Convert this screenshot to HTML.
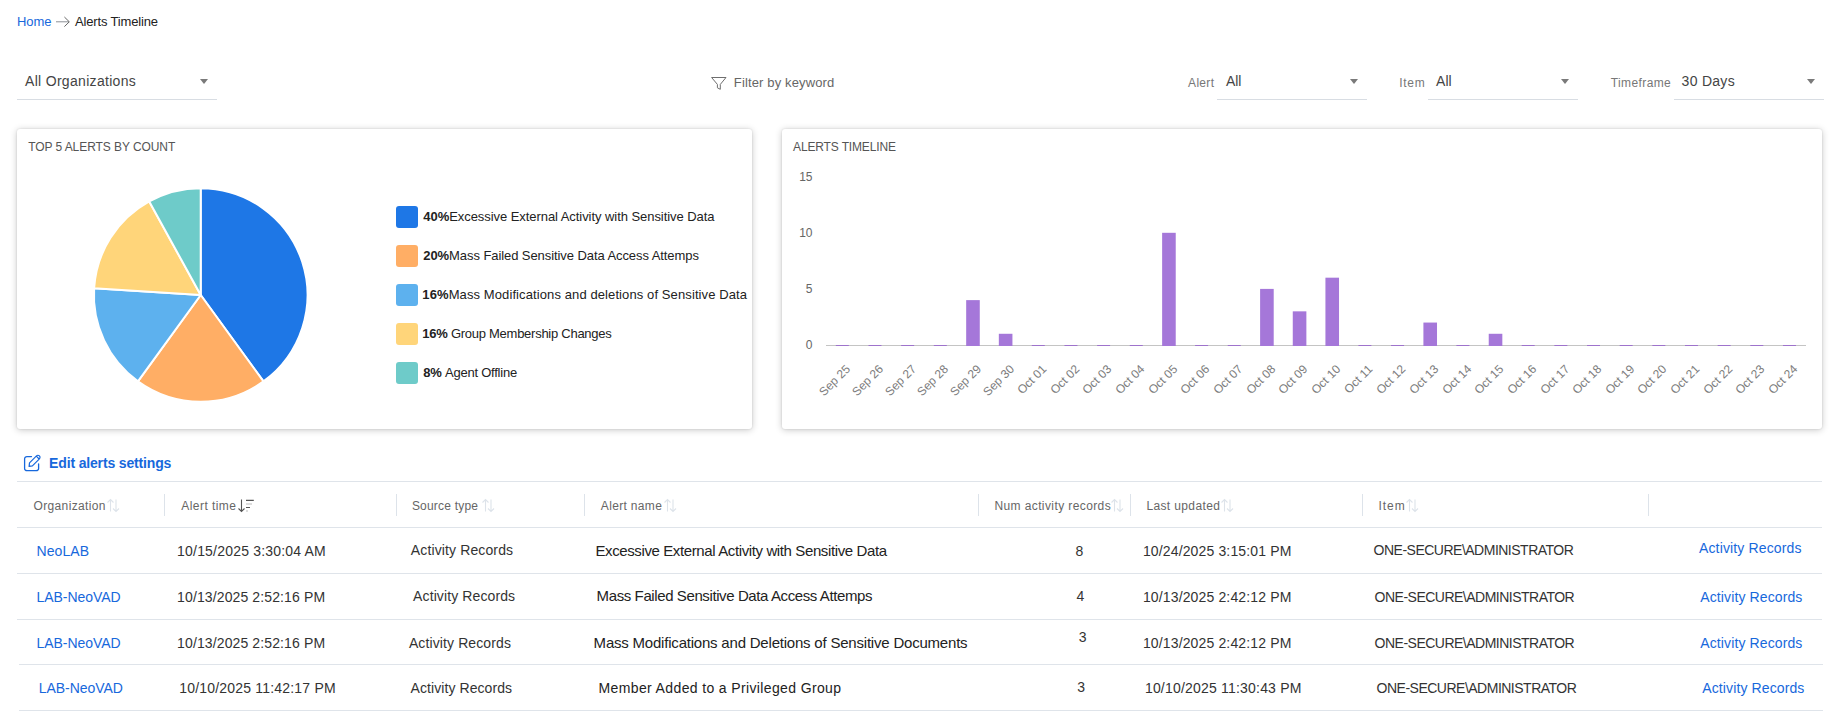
<!DOCTYPE html>
<html><head><meta charset="utf-8"><title>Alerts Timeline</title>
<style>
html,body{margin:0;padding:0;background:#fff;width:1831px;height:714px;overflow:hidden;position:relative;font-family:"Liberation Sans", sans-serif}
.t{position:absolute;white-space:pre;font-family:"Liberation Sans", sans-serif}
.card{position:absolute;background:#fff;border-radius:3px;box-shadow:0 0 2px rgba(0,0,0,0.12),0 1px 7px rgba(0,0,0,0.22)}
.xl{transform-origin:100% 50%;transform:rotate(-45deg)}
b{font-weight:700}
</style></head><body>
<div class="t" style="left:16.90px;top:15.00px;font-size:13px;line-height:13px;color:#1768dc;font-weight:400;letter-spacing:0.000px;">Home</div>
<svg style="position:absolute;left:50px;top:10px" width="25" height="20" viewBox="50 10 25 20"><path d="M56 21.8H69" fill="none" stroke="#8c9196" stroke-width="1"/><path d="M64.4 17L69.3 21.8L64.4 26.6" fill="none" stroke="#666" stroke-width="1"/></svg>
<div class="t" style="left:75.10px;top:15.00px;font-size:13px;line-height:13px;color:#222;font-weight:400;letter-spacing:-0.171px;">Alerts Timeline</div>
<div class="t" style="left:25.00px;top:74.15px;font-size:14px;line-height:14px;color:#444;font-weight:400;letter-spacing:0.312px;">All Organizations</div>
<svg style="position:absolute;left:200px;top:79px" width="8" height="5" viewBox="0 0 8 5"><path d="M0 0H8L4.0 5Z" fill="#7a7a7a"/></svg>
<div style="position:absolute;left:17px;top:99px;width:200px;height:1px;background:#d8dde3;"></div>
<svg style="position:absolute;left:705px;top:70px" width="30" height="25" viewBox="705 70 30 25"><path d="M711.6 77.5H726L720.3 84.4V89.3L717.4 87.8V84.4Z" fill="none" stroke="#6e6e6e" stroke-width="1" stroke-linejoin="round"/></svg>
<div class="t" style="left:733.80px;top:75.70px;font-size:13px;line-height:13px;color:#666;font-weight:400;letter-spacing:0.138px;">Filter by keyword</div>
<div class="t" style="left:1188.10px;top:76.84px;font-size:12px;line-height:12px;color:#777;font-weight:400;letter-spacing:0.300px;">Alert</div>
<div class="t" style="left:1225.90px;top:74.15px;font-size:14px;line-height:14px;color:#444;font-weight:400;letter-spacing:0.000px;">All</div>
<svg style="position:absolute;left:1350px;top:79px" width="8" height="5" viewBox="0 0 8 5"><path d="M0 0H8L4.0 5Z" fill="#7a7a7a"/></svg>
<div style="position:absolute;left:1217px;top:99px;width:150px;height:1px;background:#d8dde3;"></div>
<div class="t" style="left:1399.20px;top:76.84px;font-size:12px;line-height:12px;color:#777;font-weight:400;letter-spacing:0.700px;">Item</div>
<div class="t" style="left:1436.10px;top:74.15px;font-size:14px;line-height:14px;color:#444;font-weight:400;letter-spacing:0.000px;">All</div>
<svg style="position:absolute;left:1561px;top:79px" width="8" height="5" viewBox="0 0 8 5"><path d="M0 0H8L4.0 5Z" fill="#7a7a7a"/></svg>
<div style="position:absolute;left:1428px;top:99px;width:150px;height:1px;background:#d8dde3;"></div>
<div class="t" style="left:1610.70px;top:76.84px;font-size:12px;line-height:12px;color:#777;font-weight:400;letter-spacing:0.400px;">Timeframe</div>
<div class="t" style="left:1681.60px;top:74.15px;font-size:14px;line-height:14px;color:#444;font-weight:400;letter-spacing:0.283px;">30 Days</div>
<svg style="position:absolute;left:1807px;top:79px" width="8" height="5" viewBox="0 0 8 5"><path d="M0 0H8L4.0 5Z" fill="#7a7a7a"/></svg>
<div style="position:absolute;left:1674px;top:99px;width:150px;height:1px;background:#d8dde3;"></div>
<div class="card" style="left:17px;top:129px;width:735px;height:300px"></div>
<div class="card" style="left:782px;top:129px;width:1040px;height:300px"></div>
<div class="t" style="left:28.20px;top:140.84px;font-size:12px;line-height:12px;color:#555;font-weight:400;letter-spacing:-0.070px;">TOP 5 ALERTS BY COUNT</div>
<div class="t" style="left:793.10px;top:140.84px;font-size:12px;line-height:12px;color:#555;font-weight:400;letter-spacing:-0.150px;">ALERTS TIMELINE</div>
<svg style="position:absolute;left:0;top:0" width="760" height="440"><path d="M200.7 295L200.700 188.200A106.8 106.8 0 0 1 263.475 381.403Z" fill="#1e77e6" stroke="#fff" stroke-width="2" stroke-linejoin="round"/><path d="M200.7 295L263.475 381.403A106.8 106.8 0 0 1 137.925 381.403Z" fill="#ffae65" stroke="#fff" stroke-width="2" stroke-linejoin="round"/><path d="M200.7 295L137.925 381.403A106.8 106.8 0 0 1 94.111 288.294Z" fill="#5db1ee" stroke="#fff" stroke-width="2" stroke-linejoin="round"/><path d="M200.7 295L94.111 288.294A106.8 106.8 0 0 1 149.249 201.410Z" fill="#ffd57a" stroke="#fff" stroke-width="2" stroke-linejoin="round"/><path d="M200.7 295L149.249 201.410A106.8 106.8 0 0 1 200.700 188.200Z" fill="#6ecbc9" stroke="#fff" stroke-width="2" stroke-linejoin="round"/></svg>
<div style="position:absolute;left:396px;top:206px;width:21.5px;height:22px;background:#1e77e6;border-radius:3px"></div>
<div class="t" style="left:423.30px;top:209.80px;font-size:13px;line-height:13px;color:#222;font-weight:400;letter-spacing:-0.059px;"><b>40%</b>Excessive External Activity with Sensitive Data</div>
<div style="position:absolute;left:396px;top:245px;width:21.5px;height:22px;background:#ffae65;border-radius:3px"></div>
<div class="t" style="left:423.30px;top:248.80px;font-size:13px;line-height:13px;color:#222;font-weight:400;letter-spacing:-0.077px;"><b>20%</b>Mass Failed Sensitive Data Access Attemps</div>
<div style="position:absolute;left:396px;top:284px;width:21.5px;height:22px;background:#5db1ee;border-radius:3px"></div>
<div class="t" style="left:422.30px;top:287.80px;font-size:13px;line-height:13px;color:#222;font-weight:400;letter-spacing:0.102px;"><b>16%</b>Mass Modifications and deletions of Sensitive Data</div>
<div style="position:absolute;left:396px;top:323px;width:21.5px;height:22px;background:#ffd57a;border-radius:3px"></div>
<div class="t" style="left:422.30px;top:326.80px;font-size:13px;line-height:13px;color:#222;font-weight:400;letter-spacing:-0.263px;"><b>16%</b>&nbsp;Group Membership Changes</div>
<div style="position:absolute;left:396px;top:362px;width:21.5px;height:22px;background:#6ecbc9;border-radius:3px"></div>
<div class="t" style="left:423.30px;top:365.80px;font-size:13px;line-height:13px;color:#222;font-weight:400;letter-spacing:-0.233px;"><b>8%</b>&nbsp;Agent Offline</div>
<svg style="position:absolute;left:0;top:0" width="1831" height="440"><rect x="826" y="345" width="980" height="1" fill="#c4c4c4"/><rect x="835.83" y="345" width="13" height="1" fill="#9e73cc"/><rect x="868.49" y="345" width="13" height="1" fill="#9e73cc"/><rect x="901.15" y="345" width="13" height="1" fill="#9e73cc"/><rect x="933.81" y="345" width="13" height="1" fill="#9e73cc"/><rect x="966.17" y="300.12" width="13.6" height="45.88" fill="#a577d9"/><rect x="998.83" y="333.78" width="13.6" height="12.22" fill="#a577d9"/><rect x="1031.79" y="345" width="13" height="1" fill="#9e73cc"/><rect x="1064.45" y="345" width="13" height="1" fill="#9e73cc"/><rect x="1097.11" y="345" width="13" height="1" fill="#9e73cc"/><rect x="1129.77" y="345" width="13" height="1" fill="#9e73cc"/><rect x="1162.13" y="232.80" width="13.6" height="113.20" fill="#a577d9"/><rect x="1195.09" y="345" width="13" height="1" fill="#9e73cc"/><rect x="1227.75" y="345" width="13" height="1" fill="#9e73cc"/><rect x="1260.11" y="288.90" width="13.6" height="57.10" fill="#a577d9"/><rect x="1292.77" y="311.34" width="13.6" height="34.66" fill="#a577d9"/><rect x="1325.43" y="277.68" width="13.6" height="68.32" fill="#a577d9"/><rect x="1358.39" y="345" width="13" height="1" fill="#9e73cc"/><rect x="1391.05" y="345" width="13" height="1" fill="#9e73cc"/><rect x="1423.41" y="322.56" width="13.6" height="23.44" fill="#a577d9"/><rect x="1456.37" y="345" width="13" height="1" fill="#9e73cc"/><rect x="1488.73" y="333.78" width="13.6" height="12.22" fill="#a577d9"/><rect x="1521.69" y="345" width="13" height="1" fill="#9e73cc"/><rect x="1554.35" y="345" width="13" height="1" fill="#9e73cc"/><rect x="1587.01" y="345" width="13" height="1" fill="#9e73cc"/><rect x="1619.67" y="345" width="13" height="1" fill="#9e73cc"/><rect x="1652.33" y="345" width="13" height="1" fill="#9e73cc"/><rect x="1684.99" y="345" width="13" height="1" fill="#9e73cc"/><rect x="1717.65" y="345" width="13" height="1" fill="#9e73cc"/><rect x="1750.31" y="345" width="13" height="1" fill="#9e73cc"/><rect x="1782.97" y="345" width="13" height="1" fill="#9e73cc"/></svg>
<div class="t" style="right:1018.5px;top:170.64px;font-size:12px;line-height:12px;color:#666">15</div>
<div class="t" style="right:1018.5px;top:226.74px;font-size:12px;line-height:12px;color:#666">10</div>
<div class="t" style="right:1018.5px;top:282.84px;font-size:12px;line-height:12px;color:#666">5</div>
<div class="t" style="right:1018.5px;top:339.34px;font-size:12px;line-height:12px;color:#666">0</div>
<div class="t xl" style="right:982.67px;top:360.5px;font-size:12px;line-height:12px;color:#7c7c7c">Sep 25</div>
<div class="t xl" style="right:950.01px;top:360.5px;font-size:12px;line-height:12px;color:#7c7c7c">Sep 26</div>
<div class="t xl" style="right:917.35px;top:360.5px;font-size:12px;line-height:12px;color:#7c7c7c">Sep 27</div>
<div class="t xl" style="right:884.69px;top:360.5px;font-size:12px;line-height:12px;color:#7c7c7c">Sep 28</div>
<div class="t xl" style="right:852.03px;top:360.5px;font-size:12px;line-height:12px;color:#7c7c7c">Sep 29</div>
<div class="t xl" style="right:819.37px;top:360.5px;font-size:12px;line-height:12px;color:#7c7c7c">Sep 30</div>
<div class="t xl" style="right:786.71px;top:360.5px;font-size:12px;line-height:12px;color:#7c7c7c">Oct 01</div>
<div class="t xl" style="right:754.05px;top:360.5px;font-size:12px;line-height:12px;color:#7c7c7c">Oct 02</div>
<div class="t xl" style="right:721.39px;top:360.5px;font-size:12px;line-height:12px;color:#7c7c7c">Oct 03</div>
<div class="t xl" style="right:688.73px;top:360.5px;font-size:12px;line-height:12px;color:#7c7c7c">Oct 04</div>
<div class="t xl" style="right:656.07px;top:360.5px;font-size:12px;line-height:12px;color:#7c7c7c">Oct 05</div>
<div class="t xl" style="right:623.41px;top:360.5px;font-size:12px;line-height:12px;color:#7c7c7c">Oct 06</div>
<div class="t xl" style="right:590.75px;top:360.5px;font-size:12px;line-height:12px;color:#7c7c7c">Oct 07</div>
<div class="t xl" style="right:558.09px;top:360.5px;font-size:12px;line-height:12px;color:#7c7c7c">Oct 08</div>
<div class="t xl" style="right:525.43px;top:360.5px;font-size:12px;line-height:12px;color:#7c7c7c">Oct 09</div>
<div class="t xl" style="right:492.77px;top:360.5px;font-size:12px;line-height:12px;color:#7c7c7c">Oct 10</div>
<div class="t xl" style="right:460.11px;top:360.5px;font-size:12px;line-height:12px;color:#7c7c7c">Oct 11</div>
<div class="t xl" style="right:427.45px;top:360.5px;font-size:12px;line-height:12px;color:#7c7c7c">Oct 12</div>
<div class="t xl" style="right:394.79px;top:360.5px;font-size:12px;line-height:12px;color:#7c7c7c">Oct 13</div>
<div class="t xl" style="right:362.13px;top:360.5px;font-size:12px;line-height:12px;color:#7c7c7c">Oct 14</div>
<div class="t xl" style="right:329.47px;top:360.5px;font-size:12px;line-height:12px;color:#7c7c7c">Oct 15</div>
<div class="t xl" style="right:296.81px;top:360.5px;font-size:12px;line-height:12px;color:#7c7c7c">Oct 16</div>
<div class="t xl" style="right:264.15px;top:360.5px;font-size:12px;line-height:12px;color:#7c7c7c">Oct 17</div>
<div class="t xl" style="right:231.49px;top:360.5px;font-size:12px;line-height:12px;color:#7c7c7c">Oct 18</div>
<div class="t xl" style="right:198.83px;top:360.5px;font-size:12px;line-height:12px;color:#7c7c7c">Oct 19</div>
<div class="t xl" style="right:166.17px;top:360.5px;font-size:12px;line-height:12px;color:#7c7c7c">Oct 20</div>
<div class="t xl" style="right:133.51px;top:360.5px;font-size:12px;line-height:12px;color:#7c7c7c">Oct 21</div>
<div class="t xl" style="right:100.85px;top:360.5px;font-size:12px;line-height:12px;color:#7c7c7c">Oct 22</div>
<div class="t xl" style="right:68.19px;top:360.5px;font-size:12px;line-height:12px;color:#7c7c7c">Oct 23</div>
<div class="t xl" style="right:35.53px;top:360.5px;font-size:12px;line-height:12px;color:#7c7c7c">Oct 24</div>
<svg style="position:absolute;left:20px;top:450px" width="25" height="25" viewBox="20 450 25 25"><path d="M31.5 456.6H26.9A2.3 2.3 0 0 0 24.6 458.9V468.4A2.3 2.3 0 0 0 26.9 470.7H36.3A2.3 2.3 0 0 0 38.6 468.4V463.9" fill="none" stroke="#1768dc" stroke-width="1.3" stroke-linecap="round"/><path d="M29.1 466.4L29.5 462.9L36.5 455.9A2.04 2.04 0 0 1 39.4 458.8L32.4 465.8Z M36.3 456.2L39.1 459" fill="none" stroke="#1768dc" stroke-width="1.2" stroke-linejoin="round"/></svg>
<div class="t" style="left:49.10px;top:455.75px;font-size:14px;line-height:14px;color:#1768dc;font-weight:700;letter-spacing:-0.158px;">Edit alerts settings</div>
<div style="position:absolute;left:17px;top:481px;width:1805px;height:1px;background:#dfe4ea;"></div>
<div style="position:absolute;left:17px;top:527px;width:1805px;height:1px;background:#dfe4ea;"></div>
<div style="position:absolute;left:17px;top:573px;width:1805px;height:1px;background:#dfe4ea;"></div>
<div style="position:absolute;left:17px;top:619px;width:1805px;height:1px;background:#dfe4ea;"></div>
<div style="position:absolute;left:19px;top:664px;width:1804px;height:1px;background:#dfe4ea;"></div>
<div style="position:absolute;left:19px;top:710px;width:1804px;height:1px;background:#dfe4ea;"></div>
<div style="position:absolute;left:164px;top:494px;width:1px;height:22px;background:#dde3ea;"></div>
<div style="position:absolute;left:396px;top:494px;width:1px;height:22px;background:#dde3ea;"></div>
<div style="position:absolute;left:584px;top:494px;width:1px;height:22px;background:#dde3ea;"></div>
<div style="position:absolute;left:978px;top:494px;width:1px;height:22px;background:#dde3ea;"></div>
<div style="position:absolute;left:1130px;top:494px;width:1px;height:22px;background:#dde3ea;"></div>
<div style="position:absolute;left:1362px;top:494px;width:1px;height:22px;background:#dde3ea;"></div>
<div style="position:absolute;left:1648px;top:494px;width:1px;height:22px;background:#dde3ea;"></div>
<div class="t" style="left:33.60px;top:499.84px;font-size:12px;line-height:12px;color:#666;font-weight:400;letter-spacing:0.336px;">Organization</div>
<div class="t" style="left:181.30px;top:499.84px;font-size:12px;line-height:12px;color:#666;font-weight:400;letter-spacing:0.444px;">Alert time</div>
<div class="t" style="left:411.90px;top:499.84px;font-size:12px;line-height:12px;color:#666;font-weight:400;letter-spacing:0.210px;">Source type</div>
<div class="t" style="left:600.80px;top:499.84px;font-size:12px;line-height:12px;color:#666;font-weight:400;letter-spacing:0.333px;">Alert name</div>
<div class="t" style="left:994.40px;top:499.84px;font-size:12px;line-height:12px;color:#666;font-weight:400;letter-spacing:0.400px;">Num activity records</div>
<div class="t" style="left:1146.40px;top:499.84px;font-size:12px;line-height:12px;color:#666;font-weight:400;letter-spacing:0.373px;">Last updated</div>
<div class="t" style="left:1378.40px;top:499.84px;font-size:12px;line-height:12px;color:#666;font-weight:400;letter-spacing:0.967px;">Item</div>
<svg style="position:absolute;left:107px;top:498px" width="14" height="15" viewBox="0 0 14 15"><path d="M3.5 1.5V13.5M0.5 4.5L3.5 1.5L6.5 4.5M9 1.5V13.5M6 10.5L9 13.5L12 10.5" fill="none" stroke="#dde3ea" stroke-width="1.1"/></svg>
<svg style="position:absolute;left:482px;top:498px" width="14" height="15" viewBox="0 0 14 15"><path d="M3.5 1.5V13.5M0.5 4.5L3.5 1.5L6.5 4.5M9 1.5V13.5M6 10.5L9 13.5L12 10.5" fill="none" stroke="#dde3ea" stroke-width="1.1"/></svg>
<svg style="position:absolute;left:664px;top:498px" width="14" height="15" viewBox="0 0 14 15"><path d="M3.5 1.5V13.5M0.5 4.5L3.5 1.5L6.5 4.5M9 1.5V13.5M6 10.5L9 13.5L12 10.5" fill="none" stroke="#dde3ea" stroke-width="1.1"/></svg>
<svg style="position:absolute;left:1111px;top:498px" width="14" height="15" viewBox="0 0 14 15"><path d="M3.5 1.5V13.5M0.5 4.5L3.5 1.5L6.5 4.5M9 1.5V13.5M6 10.5L9 13.5L12 10.5" fill="none" stroke="#dde3ea" stroke-width="1.1"/></svg>
<svg style="position:absolute;left:1221px;top:498px" width="14" height="15" viewBox="0 0 14 15"><path d="M3.5 1.5V13.5M0.5 4.5L3.5 1.5L6.5 4.5M9 1.5V13.5M6 10.5L9 13.5L12 10.5" fill="none" stroke="#dde3ea" stroke-width="1.1"/></svg>
<svg style="position:absolute;left:1406px;top:498px" width="14" height="15" viewBox="0 0 14 15"><path d="M3.5 1.5V13.5M0.5 4.5L3.5 1.5L6.5 4.5M9 1.5V13.5M6 10.5L9 13.5L12 10.5" fill="none" stroke="#dde3ea" stroke-width="1.1"/></svg>
<svg style="position:absolute;left:236px;top:498px" width="20" height="15" viewBox="0 0 20 15"><path d="M5.5 1.5V13.5M2.5 10.5L5.5 13.5L8.5 10.5" fill="none" stroke="#555" stroke-width="1.1"/><path d="M10 2.4H17.8M10 9.5H14" stroke="#555" stroke-width="1.1"/><path d="M10 6H16M10 13H12" stroke="#bbb" stroke-width="1.1"/></svg>
<div class="t" style="left:36.50px;top:544.15px;font-size:14px;line-height:14px;color:#1768dc;font-weight:400;letter-spacing:0.080px;">NeoLAB</div>
<div class="t" style="left:177.10px;top:544.15px;font-size:14px;line-height:14px;color:#333;font-weight:400;letter-spacing:0.195px;">10/15/2025 3:30:04 AM</div>
<div class="t" style="left:410.80px;top:542.55px;font-size:14px;line-height:14px;color:#333;font-weight:400;letter-spacing:0.127px;">Activity Records</div>
<div class="t" style="left:595.40px;top:543.10px;font-size:15px;line-height:15px;color:#222;font-weight:400;letter-spacing:-0.383px;">Excessive External Activity with Sensitive Data</div>
<div class="t" style="left:1075.50px;top:543.85px;font-size:14px;line-height:14px;color:#333;font-weight:400;letter-spacing:0.000px;">8</div>
<div class="t" style="left:1142.90px;top:544.15px;font-size:14px;line-height:14px;color:#333;font-weight:400;letter-spacing:0.145px;">10/24/2025 3:15:01 PM</div>
<div class="t" style="left:1373.60px;top:543.35px;font-size:14px;line-height:14px;color:#333;font-weight:400;letter-spacing:-0.504px;">ONE-SECURE\ADMINISTRATOR</div>
<div class="t" style="left:1699.00px;top:541.35px;font-size:14px;line-height:14px;color:#1768dc;font-weight:400;letter-spacing:0.140px;">Activity Records</div>
<div class="t" style="left:36.50px;top:590.15px;font-size:14px;line-height:14px;color:#1768dc;font-weight:400;letter-spacing:-0.044px;">LAB-NeoVAD</div>
<div class="t" style="left:177.10px;top:590.15px;font-size:14px;line-height:14px;color:#333;font-weight:400;letter-spacing:0.120px;">10/13/2025 2:52:16 PM</div>
<div class="t" style="left:413.10px;top:589.45px;font-size:14px;line-height:14px;color:#333;font-weight:400;letter-spacing:0.107px;">Activity Records</div>
<div class="t" style="left:596.60px;top:588.10px;font-size:15px;line-height:15px;color:#222;font-weight:400;letter-spacing:-0.397px;">Mass Failed Sensitive Data Access Attemps</div>
<div class="t" style="left:1076.50px;top:589.45px;font-size:14px;line-height:14px;color:#333;font-weight:400;letter-spacing:0.000px;">4</div>
<div class="t" style="left:1142.90px;top:590.15px;font-size:14px;line-height:14px;color:#333;font-weight:400;letter-spacing:0.145px;">10/13/2025 2:42:12 PM</div>
<div class="t" style="left:1374.60px;top:590.45px;font-size:14px;line-height:14px;color:#333;font-weight:400;letter-spacing:-0.509px;">ONE-SECURE\ADMINISTRATOR</div>
<div class="t" style="left:1700.30px;top:590.15px;font-size:14px;line-height:14px;color:#1768dc;font-weight:400;letter-spacing:0.113px;">Activity Records</div>
<div class="t" style="left:36.50px;top:636.15px;font-size:14px;line-height:14px;color:#1768dc;font-weight:400;letter-spacing:-0.044px;">LAB-NeoVAD</div>
<div class="t" style="left:177.10px;top:636.15px;font-size:14px;line-height:14px;color:#333;font-weight:400;letter-spacing:0.120px;">10/13/2025 2:52:16 PM</div>
<div class="t" style="left:408.90px;top:636.15px;font-size:14px;line-height:14px;color:#333;font-weight:400;letter-spacing:0.113px;">Activity Records</div>
<div class="t" style="left:593.60px;top:635.00px;font-size:15px;line-height:15px;color:#222;font-weight:400;letter-spacing:-0.207px;">Mass Modifications and Deletions of Sensitive Documents</div>
<div class="t" style="left:1078.80px;top:630.35px;font-size:14px;line-height:14px;color:#333;font-weight:400;letter-spacing:0.000px;">3</div>
<div class="t" style="left:1142.90px;top:636.15px;font-size:14px;line-height:14px;color:#333;font-weight:400;letter-spacing:0.145px;">10/13/2025 2:42:12 PM</div>
<div class="t" style="left:1374.60px;top:636.15px;font-size:14px;line-height:14px;color:#333;font-weight:400;letter-spacing:-0.509px;">ONE-SECURE\ADMINISTRATOR</div>
<div class="t" style="left:1700.30px;top:636.15px;font-size:14px;line-height:14px;color:#1768dc;font-weight:400;letter-spacing:0.113px;">Activity Records</div>
<div class="t" style="left:38.70px;top:681.35px;font-size:14px;line-height:14px;color:#1768dc;font-weight:400;letter-spacing:-0.044px;">LAB-NeoVAD</div>
<div class="t" style="left:179.20px;top:681.35px;font-size:14px;line-height:14px;color:#333;font-weight:400;letter-spacing:0.195px;">10/10/2025 11:42:17 PM</div>
<div class="t" style="left:410.60px;top:681.35px;font-size:14px;line-height:14px;color:#333;font-weight:400;letter-spacing:0.073px;">Activity Records</div>
<div class="t" style="left:598.60px;top:680.95px;font-size:14px;line-height:14px;color:#222;font-weight:400;letter-spacing:0.367px;">Member Added to a Privileged Group</div>
<div class="t" style="left:1077.30px;top:679.95px;font-size:14px;line-height:14px;color:#333;font-weight:400;letter-spacing:0.000px;">3</div>
<div class="t" style="left:1144.90px;top:681.35px;font-size:14px;line-height:14px;color:#333;font-weight:400;letter-spacing:0.200px;">10/10/2025 11:30:43 PM</div>
<div class="t" style="left:1376.60px;top:681.15px;font-size:14px;line-height:14px;color:#333;font-weight:400;letter-spacing:-0.504px;">ONE-SECURE\ADMINISTRATOR</div>
<div class="t" style="left:1702.30px;top:681.15px;font-size:14px;line-height:14px;color:#1768dc;font-weight:400;letter-spacing:0.113px;">Activity Records</div>
</body></html>
